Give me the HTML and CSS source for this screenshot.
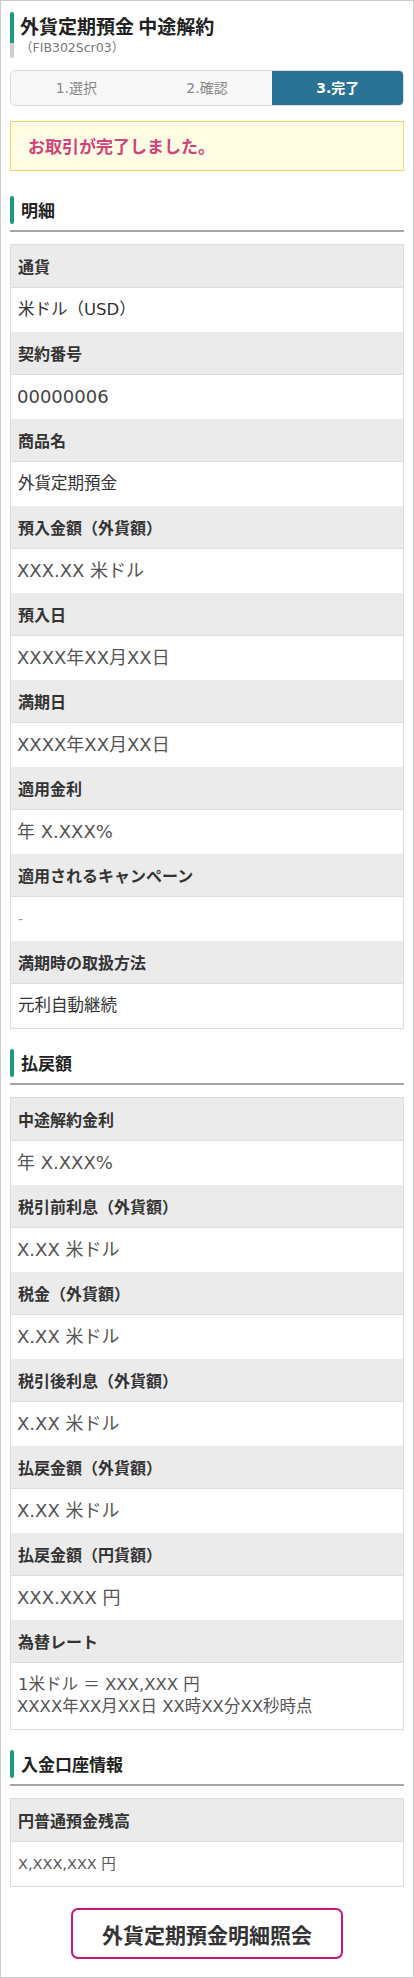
FILE: index.html
```html
<!DOCTYPE html>
<html lang="ja">
<head>
    <meta charset="UTF-8">
    <meta name="viewport" content="width=device-width, initial-scale=1.0">
    <title>外貨定期預金 中途解約</title>
    <link rel="stylesheet" href="styles.css">
</head>
<body>
    <div class="page">
        <div class="page-title">
            <div class="title-bar"></div>
            <div class="title-text">
                <h1>外貨定期預金 中途解約</h1>
                <p class="screen-id">（FIB302Scr03）</p>
            </div>
        </div>

        <div class="steps">
            <div class="step">1.選択</div>
            <div class="step">2.確認</div>
            <div class="step current">3.完了</div>
        </div>

        <div class="notice">お取引が完了しました。</div>

        <h2 class="section-head"><span class="head-bar"></span>明細</h2>
        <div class="detail">
            <div class="label">通貨</div>
            <div class="value">米ドル（USD）</div>
            <div class="label">契約番号</div>
            <div class="value num">00000006</div>
            <div class="label">商品名</div>
            <div class="value">外貨定期預金</div>
            <div class="label">預入金額（外貨額）</div>
            <div class="value amount">XXX.XX 米ドル</div>
            <div class="label">預入日</div>
            <div class="value amount">XXXX年XX月XX日</div>
            <div class="label">満期日</div>
            <div class="value amount">XXXX年XX月XX日</div>
            <div class="label">適用金利</div>
            <div class="value amount">年 X.XXX%</div>
            <div class="label">適用されるキャンペーン</div>
            <div class="value muted">-</div>
            <div class="label">満期時の取扱方法</div>
            <div class="value">元利自動継続</div>
        </div>

        <h2 class="section-head"><span class="head-bar"></span>払戻額</h2>
        <div class="detail">
            <div class="label">中途解約金利</div>
            <div class="value amount">年 X.XXX%</div>
            <div class="label">税引前利息（外貨額）</div>
            <div class="value amount">X.XX 米ドル</div>
            <div class="label">税金（外貨額）</div>
            <div class="value amount">X.XX 米ドル</div>
            <div class="label">税引後利息（外貨額）</div>
            <div class="value amount">X.XX 米ドル</div>
            <div class="label">払戻金額（外貨額）</div>
            <div class="value amount">X.XX 米ドル</div>
            <div class="label">払戻金額（円貨額）</div>
            <div class="value amount">XXX.XXX 円</div>
            <div class="label">為替レート</div>
            <div class="value rate">
                <span class="rate-line first">1米ドル ＝ XXX,XXX 円</span>
                <span class="rate-line">XXXX年XX月XX日 XX時XX分XX秒時点</span>
            </div>
        </div>

        <h2 class="section-head"><span class="head-bar"></span>入金口座情報</h2>
        <div class="detail">
            <div class="label">円普通預金残高</div>
            <div class="value small">X,XXX,XXX 円</div>
        </div>

        <div class="actions">
            <button class="btn">外貨定期預金明細照会</button>
        </div>
    </div>
</body>
</html>
```

FILE: styles.css
```css
body {
    margin: 0;
    padding: 0;
    background: #fff;
    font-family: "DejaVu Sans", "Noto Sans CJK JP", sans-serif;
    color: #333;
}
.page {
    min-height: 1978px;
    box-sizing: border-box;
    border: 1px solid #ccc;
    padding: 11px 9px 0;
}
.page-title {
    display: flex;
    gap: 6px;
}
.title-bar {
    width: 4px;
    height: 46px;
    border-radius: 2px;
    background: linear-gradient(#1d9a7c 0 31px, #cfcfcf 31px);
}
.page-title h1 {
    margin: 0;
    font-family: "Noto Sans CJK JP", sans-serif;
    font-size: 19px;
    line-height: 28px;
    font-weight: bold;
    color: #222;
}
.screen-id {
    margin: 0;
    font-size: 12.5px;
    line-height: 16px;
    color: #777;
}
.steps {
    display: flex;
    margin-top: 12px;
    border: 1px solid #ddd;
    border-radius: 5px;
    background: #f8f8f8;
    overflow: hidden;
}
.step {
    flex: 1;
    height: 34px;
    line-height: 34px;
    text-align: center;
    font-size: 14px;
    color: #888;
}
.step.current {
    background: #2b7394;
    color: #fff;
    font-weight: bold;
}
.notice {
    margin-top: 15px;
    height: 48px;
    line-height: 48px;
    padding: 0 17px;
    background: #fffde3;
    border: 1px solid #f5d06c;
    font-family: "Noto Sans CJK JP", sans-serif;
    font-size: 17px;
    font-weight: bold;
    color: #d1437a;
}
.section-head {
    display: flex;
    align-items: center;
    gap: 7px;
    margin: 25px 0 12px;
    padding-bottom: 6px;
    border-bottom: 2px solid #a5a5a5;
    font-family: "Noto Sans CJK JP", sans-serif;
    font-size: 17px;
    line-height: 28px;
    color: #222;
}
.detail + .section-head {
    margin-top: 20px;
}
.head-bar {
    width: 4px;
    height: 28px;
    border-radius: 2px;
    background: #1d9a7c;
}
.detail {
    border: 1px solid #ddd;
}
.label {
    height: 42px;
    line-height: 42px;
    padding: 0 7px;
    background: #ebebeb;
    border-bottom: 1px solid #ddd;
    font-family: "Noto Sans CJK JP", sans-serif;
    font-size: 16px;
    font-weight: bold;
}
.value {
    height: 44px;
    line-height: 44px;
    padding: 0 7px;
    font-size: 16.5px;
    color: #333;
}
.value.amount, .value.num {
    font-size: 18px;
    color: #555;
    padding-left: 6px;
}
.value.num {
    color: #444;
}
.value.muted {
    font-size: 14px;
    color: #999;
}
.value.small {
    font-size: 14.5px;
    color: #555;
}
.value.rate {
    height: auto;
    padding: 11px 6px;
    line-height: 22px;
    font-size: 16.5px;
    color: #555;
}
.rate-line {
    display: block;
}
.rate-line.first {
    padding-left: 1px;
}
.actions {
    display: flex;
    justify-content: center;
    margin-top: 21px;
}
.btn {
    width: 272px;
    height: 51px;
    background: #fff;
    border: 2px solid #c2187f;
    border-radius: 7px;
    font-family: "Noto Sans CJK JP", sans-serif;
    font-size: 21px;
    font-weight: bold;
    color: #333;
    cursor: pointer;
}
```
